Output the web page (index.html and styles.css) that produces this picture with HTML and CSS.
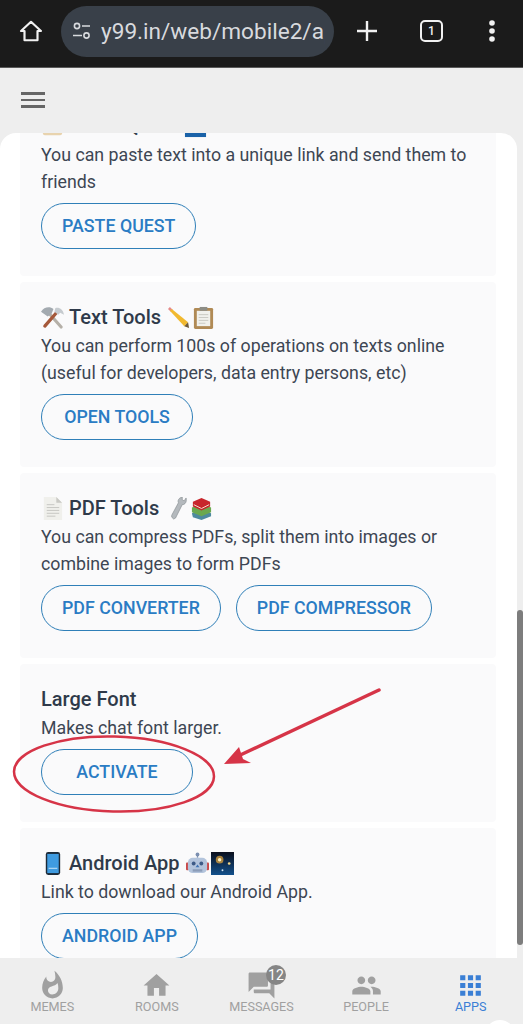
FILE: index.html
```html
<!DOCTYPE html>
<html lang="en">
  <head>
    <meta charset="UTF-8">
    <meta name="viewport" content="width=device-width, initial-scale=1.0">
    <title>Apps</title>
    <link rel="stylesheet" href="styles.css">
  </head>
  <body>
    <div class="page">
      <header class="browser-bar">
        <svg class="browser-bar__icon" viewBox="0 0 24 24"><path d="M12 3.500 2.800 12H6v8.500h12V12h3.200z" fill="none" stroke="#f1f1f1" stroke-width="2" stroke-linejoin="round"/></svg>
        <div class="address">
          <svg class="address__tune" viewBox="0 0 20 20"><g fill="none" stroke="#d8dade" stroke-width="1.600"><circle cx="5" cy="5" r="2.600"/><circle cx="14.500" cy="14.500" r="2.600"/><path d="M10 5h8M1 14.500h9"/></g></svg>
          <span class="address__text">y99.in/web/mobile2/apps</span>
        </div>
        <svg class="browser-bar__plus" viewBox="0 0 22 22"><path d="M11 1v20M1 11h20" stroke="#f1f1f1" stroke-width="2.400"/></svg>
        <div class="tab-count">1</div>
        <svg class="browser-bar__dots" viewBox="0 0 6 22"><g fill="#f1f1f1"><circle cx="3" cy="3" r="2.800"/><circle cx="3" cy="11" r="2.800"/><circle cx="3" cy="19" r="2.800"/></g></svg>
      </header>

      <div class="app-header">
        <div class="hamburger"><span></span><span></span><span></span></div>
      </div>

      <main class="content">
        <div class="panel">
          <div class="cards">
            <section class="card">
              <h3 class="card__title">
                <svg class="emoji" viewBox="0 0 24 24"><rect x="2" y="3" width="20" height="18" rx="2" fill="#e8d3ae"/><rect x="0" y="1" width="24" height="4" rx="2" fill="#b9926a"/></svg>
                Paste Quest
                <svg class="emoji emoji--gap" viewBox="0 0 24 24"><rect x="1" y="1" width="22" height="22" fill="#1a62a8"/></svg>
              </h3>
              <p class="card__text">You can paste text into a unique link and send them to friends</p>
              <div class="card__actions"><a class="btn">Paste Quest</a></div>
            </section>

            <section class="card">
              <h3 class="card__title">
                <svg class="emoji" viewBox="0 0 24 24"><path d="M6 5 21 22" stroke="#b5b0a8" stroke-width="3.200" stroke-linecap="round"/><path d="M4 21 17 6" stroke="#a5583a" stroke-width="3.400" stroke-linecap="round"/><path d="M0 6c3-5 9-6 13-3l-2 5-4 3z" fill="#a3aab0"/><path d="M15 2c4-1 8 1 9 7l-4-2-2 2-4-3z" fill="#c6cbcf"/></svg>
                Text Tools
                <svg class="emoji emoji--gap" viewBox="0 0 24 24"><path d="M3 1 1 3l3 3 2-2z" fill="#e58a8a"/><path d="M5 3 3 5l15 16 4-4z" fill="#f1b92f"/><path d="m18 21 5 2-1-6z" fill="#6d5a3a"/></svg>
                <svg class="emoji emoji--tight" viewBox="0 0 24 24"><rect x="2" y="2" width="20" height="22" rx="1.500" fill="#b08a55"/><rect x="5" y="5" width="14" height="16" fill="#f1f1ec"/><rect x="8" y="1" width="8" height="4" fill="#8d8d86"/><path d="M7 9h10M7 12h10M7 15h10M7 18h7" stroke="#c9c9c2"/></svg>
              </h3>
              <p class="card__text">You can perform 100s of operations on texts online (useful for developers, data entry persons, etc)</p>
              <div class="card__actions"><a class="btn btn--wide">Open Tools</a></div>
            </section>

            <section class="card">
              <h3 class="card__title">
                <svg class="emoji" viewBox="0 0 24 24"><path d="M3 0h13l6 6v18H3z" fill="#f0f0ec"/><path d="M16 0v6h6z" fill="#c9c9c4"/><path d="M6 8h8M6 11h13M6 14h13M6 17h13M6 20h9" stroke="#c6c6c1"/></svg>
                PDF Tools
                <svg class="emoji emoji--gap" viewBox="0 0 24 24"><path d="m7 21 2 2 2-1 7-14c3 0 5-3 4-7l-2 3-2-1V0c-4 1-5 4-4 6L7 19z" fill="#b4b9bd" stroke="#7e8488" stroke-width=".6"/></svg>
                <svg class="emoji emoji--tight" viewBox="0 0 24 24"><path d="M2 17 12 13l10 4v3l-10 4-9-3z" fill="#4d8a9e"/><path d="M2 11 12 7l10 4v5l-10 4-10-4z" fill="#6aa84f"/><path d="M3 5 12 1l9 4v5l-9 4-9-4z" fill="#c8262c"/><path d="M4 8l8 4 8-4" stroke="#f3e3d0" fill="none"/></svg>
              </h3>
              <p class="card__text">You can compress PDFs, split them into images or combine images to form PDFs</p>
              <div class="card__actions">
                <a class="btn">PDF Converter</a>
                <a class="btn">PDF Compressor</a>
              </div>
            </section>

            <section class="card">
              <h3 class="card__title">Large Font</h3>
              <p class="card__text">Makes chat font larger.</p>
              <div class="card__actions"><a class="btn btn--wide">Activate</a></div>
            </section>

            <section class="card">
              <h3 class="card__title">
                <svg class="emoji" viewBox="0 0 24 24"><rect x="5" y="0" width="15" height="24" rx="2.500" fill="#1c2a38"/><rect x="6.500" y="2" width="12" height="20" fill="#3f9be0"/><path d="M8 17h9" stroke="#cde6f7"/></svg>
                Android App
                <svg class="emoji emoji--gap" viewBox="0 0 24 24"><path d="M12 6V3" stroke="#7b8fb0" stroke-width="1.400"/><circle cx="12" cy="2.500" r="2" fill="#7b8fb0"/><rect x="0" y="11" width="3" height="8" rx="1" fill="#c94a4a"/><rect x="21" y="11" width="3" height="8" rx="1" fill="#c94a4a"/><rect x="2" y="6" width="20" height="16" rx="5" fill="#b3c4dc"/><circle cx="8" cy="12" r="2" fill="#3d5a86"/><circle cx="16" cy="12" r="2" fill="#3d5a86"/><path d="M12 13l-2 3h4z" fill="#3f73b5"/><rect x="7" y="18" width="10" height="2.500" fill="#8b9cb8"/></svg>
                <svg class="emoji emoji--tight" viewBox="0 0 24 24"><defs><linearGradient id="night" x1="0" y1="0" x2="0" y2="1"><stop offset="0" stop-color="#0b0f1c"/><stop offset="1" stop-color="#12508c"/></linearGradient></defs><rect width="24" height="24" fill="url(#night)"/><circle cx="9" cy="8" r="4" fill="#e9a93c" opacity=".7"/><circle cx="9" cy="8" r="1.800" fill="#fff3c4"/><circle cx="19" cy="12" r="1.400" fill="#f5d98a"/><circle cx="12" cy="19" r="1" fill="#cfe3f5"/></svg>
              </h3>
              <p class="card__text">Link to download our Android App.</p>
              <div class="card__actions"><a class="btn">Android App</a></div>
            </section>
          </div>
        </div>
        <div class="scrollbar"><div class="scrollbar__thumb"></div></div>
      </main>

      <nav class="tabs">
        <a class="tabs__item">
          <svg class="tabs__icon" viewBox="0 0 24 24"><path d="M13.500.67s.74 2.650.74 4.800c0 2.060-1.350 3.730-3.410 3.730-2.070 0-3.630-1.670-3.630-3.730l.03-.36C5.210 7.510 4 10.620 4 14c0 4.420 3.580 8 8 8s8-3.580 8-8C20 8.610 17.410 3.800 13.500.67zM11.710 19c-1.780 0-3.220-1.400-3.220-3.140 0-1.620 1.050-2.760 2.810-3.120 1.770-.36 3.600-1.210 4.620-2.580.39 1.290.59 2.650.59 4.040 0 2.650-2.150 4.800-4.800 4.800z"/></svg>
          <span class="tabs__label">Memes</span>
        </a>
        <a class="tabs__item">
          <svg class="tabs__icon" viewBox="0 0 24 24"><path d="M10 20v-6h4v6h5v-8h3L12 3 2 12h3v8z"/></svg>
          <span class="tabs__label">Rooms</span>
        </a>
        <a class="tabs__item">
          <span class="tabs__icon-wrap">
            <svg class="tabs__icon" viewBox="0 0 24 24"><path d="M21 6h-2v9H6v2c0 .55.45 1 1 1h11l4 4V7c0-.55-.45-1-1-1zm-4 6V3c0-.55-.45-1-1-1H3c-.55 0-1 .45-1 1v14l4-4h10c.55 0 1-.45 1-1z"/></svg>
            <span class="tabs__badge">12</span>
          </span>
          <span class="tabs__label">Messages</span>
        </a>
        <a class="tabs__item">
          <svg class="tabs__icon" viewBox="0 0 24 24"><path d="M16 11c1.660 0 2.990-1.340 2.990-3S17.660 5 16 5c-1.660 0-3 1.340-3 3s1.340 3 3 3zm-8 0c1.660 0 2.990-1.340 2.990-3S9.660 5 8 5C6.340 5 5 6.340 5 8s1.340 3 3 3zm0 2c-2.330 0-7 1.170-7 3.500V19h14v-2.500c0-2.330-4.670-3.500-7-3.500zm8 0c-.29 0-.62.020-.97.050 1.160.84 1.970 1.970 1.970 3.450V19h6v-2.500c0-2.330-4.670-3.500-7-3.500z"/></svg>
          <span class="tabs__label">People</span>
        </a>
        <a class="tabs__item tabs__item--active">
          <svg class="tabs__icon" viewBox="0 0 24 24"><path d="M4 8h4V4H4v4zm6 12h4v-4h-4v4zm-6 0h4v-4H4v4zm0-6h4v-4H4v4zm6 0h4v-4h-4v4zm6-10v4h4V4h-4zm-6 4h4V4h-4v4zm6 6h4v-4h-4v4zm0 6h4v-4h-4v4z"/></svg>
          <span class="tabs__label">Apps</span>
        </a>
      </nav>

      <!-- hand drawn markup that sits on top of the screenshot -->
      <svg class="markup" viewBox="0 0 523 1024">
        <ellipse cx="114" cy="774" rx="100" ry="37.500" transform="rotate(1.500 114 774)" fill="none" stroke="#d63447" stroke-width="2.500"/>
        <path d="M379 690 236 757" stroke="#d63447" stroke-width="3.500" stroke-linecap="round"/>
        <path d="m224 764 15-17 4 12 8 4z" fill="#d63447"/>
      </svg>
      <div class="fab-edge"></div>
    </div>
  </body>
</html>
```

FILE: styles.css
```css
:root {
  --bar-dark: #1b1b1b;
  --chrome-grey: #eeeeee;
  --card-bg: #fafafb;
  --text: #3d4653;
  --title: #2f3a4a;
  --blue: #2a7cc4;
  --nav-grey: #a0a0a0;
  --font: Roboto, "Liberation Sans", sans-serif;
}

* {
  box-sizing: border-box;
}

html, body {
  margin: 0;
  padding: 0;
}

.page {
  display: flex;
  flex-direction: column;
  position: relative;
  height: 1024px;
  overflow: hidden;
  background-color: var(--chrome-grey);
  font-family: var(--font);
}

/* browser chrome */
.browser-bar {
  display: flex;
  align-items: center;
  flex: none;
  height: 68px;
  padding: 0 0 5px 18px;
  background-color: var(--bar-dark);
  border-bottom: 1px solid #5a5a5a;
}

.browser-bar__icon {
  width: 26px;
  height: 26px;
}

.address {
  display: flex;
  align-items: center;
  width: 273px;
  height: 51px;
  margin-left: 17px;
  padding-left: 11px;
  padding-right: 9px;
  background-color: #394049;
  border-radius: 26px;
}

.address__tune {
  flex: none;
  width: 20px;
  height: 20px;
}

.address__text {
  margin-left: 9px;
  overflow: hidden;
  white-space: nowrap;
  font-size: 22.600px;
  color: #d8dade;
}

.browser-bar__plus {
  width: 22px;
  height: 22px;
  margin-left: 22px;
}

.tab-count {
  width: 23px;
  height: 22px;
  margin-left: 42px;
  border: 2px solid #f1f1f1;
  border-radius: 5px;
  font-size: 12px;
  font-weight: 500;
  line-height: 18px;
  text-align: center;
  color: #f1f1f1;
}

.browser-bar__dots {
  width: 6px;
  height: 22px;
  margin-left: 46px;
}

/* app header */
.app-header {
  flex: none;
  height: 65px;
  padding: 24px 0 0 21px;
}

.hamburger {
  display: flex;
  flex-direction: column;
  gap: 4px;
  width: 24px;
}

.hamburger span {
  height: 2.500px;
  background-color: #666;
}

/* scrolled content */
.content {
  display: flex;
  flex: 1;
  min-height: 0;
}

.panel {
  flex: 1;
  min-width: 0;
  overflow: hidden;
  padding: 0 21px 0 20px;
  background-color: #fff;
  border-radius: 16px 16px 0 0;
}

.cards {
  display: flex;
  flex-direction: column;
  gap: 6px;
  margin-top: -42px;
}

.card {
  flex: none;
  padding: 20px 21px 27px;
  background-color: var(--card-bg);
  border-radius: 4px;
}

.card__title {
  display: flex;
  align-items: center;
  gap: 5px;
  height: 31px;
  margin: 0;
  padding-bottom: 1px;
  font-size: 20px;
  font-weight: 500;
  color: var(--title);
}

.emoji {
  flex: none;
  width: 23px;
  height: 23px;
}

.emoji--gap {
  margin-left: 1px;
}

.emoji--tight {
  margin-left: -3px;
}

.card__text {
  margin: 0;
  font-size: 17.750px;
  line-height: 27px;
  color: var(--text);
}

.card__actions {
  display: flex;
  gap: 15px;
  margin-top: 7px;
}

.btn {
  display: block;
  height: 46px;
  padding: 0 20px;
  border: 1px solid #2f7fb8;
  border-radius: 23px;
  font-size: 17.800px;
  font-weight: 500;
  line-height: 44px;
  text-align: center;
  text-transform: uppercase;
  color: var(--blue);
}

.btn--wide {
  min-width: 152px;
}

.scrollbar {
  flex: none;
  width: 6px;
  padding-top: 477px;
}

.scrollbar__thumb {
  width: 6px;
  height: 335px;
  background-color: #7d7d7d;
  border-radius: 3px;
}

/* bottom nav */
.tabs {
  display: grid;
  grid-template-columns: repeat(5, 1fr);
  flex: none;
  height: 66px;
  padding-top: 12px;
  background-color: var(--chrome-grey);
}

.tabs__item {
  display: flex;
  flex-direction: column;
  align-items: center;
  color: var(--nav-grey);
}

.tabs__item--active {
  color: #3a7fd5;
}

.tabs__icon-wrap {
  display: block;
  position: relative;
  height: 31px;
}

.tabs__icon {
  display: block;
  width: 31px;
  height: 31px;
  fill: currentColor;
}

.tabs__badge {
  position: absolute;
  top: -5px;
  left: 20px;
  width: 20px;
  height: 20px;
  background-color: #858585;
  border-radius: 50%;
  font-size: 14px;
  line-height: 20px;
  text-align: center;
  color: #fff;
}

.tabs__label {
  margin-top: -2px;
  font-size: 12.600px;
  line-height: 16px;
  text-transform: uppercase;
}

.markup {
  position: absolute;
  top: 0;
  left: 0;
  width: 523px;
  height: 1024px;
  pointer-events: none;
}

.fab-edge {
  position: absolute;
  top: 1020px;
  left: 485px;
  width: 30px;
  height: 30px;
  background-color: #fff;
  border-radius: 50%;
}
```
